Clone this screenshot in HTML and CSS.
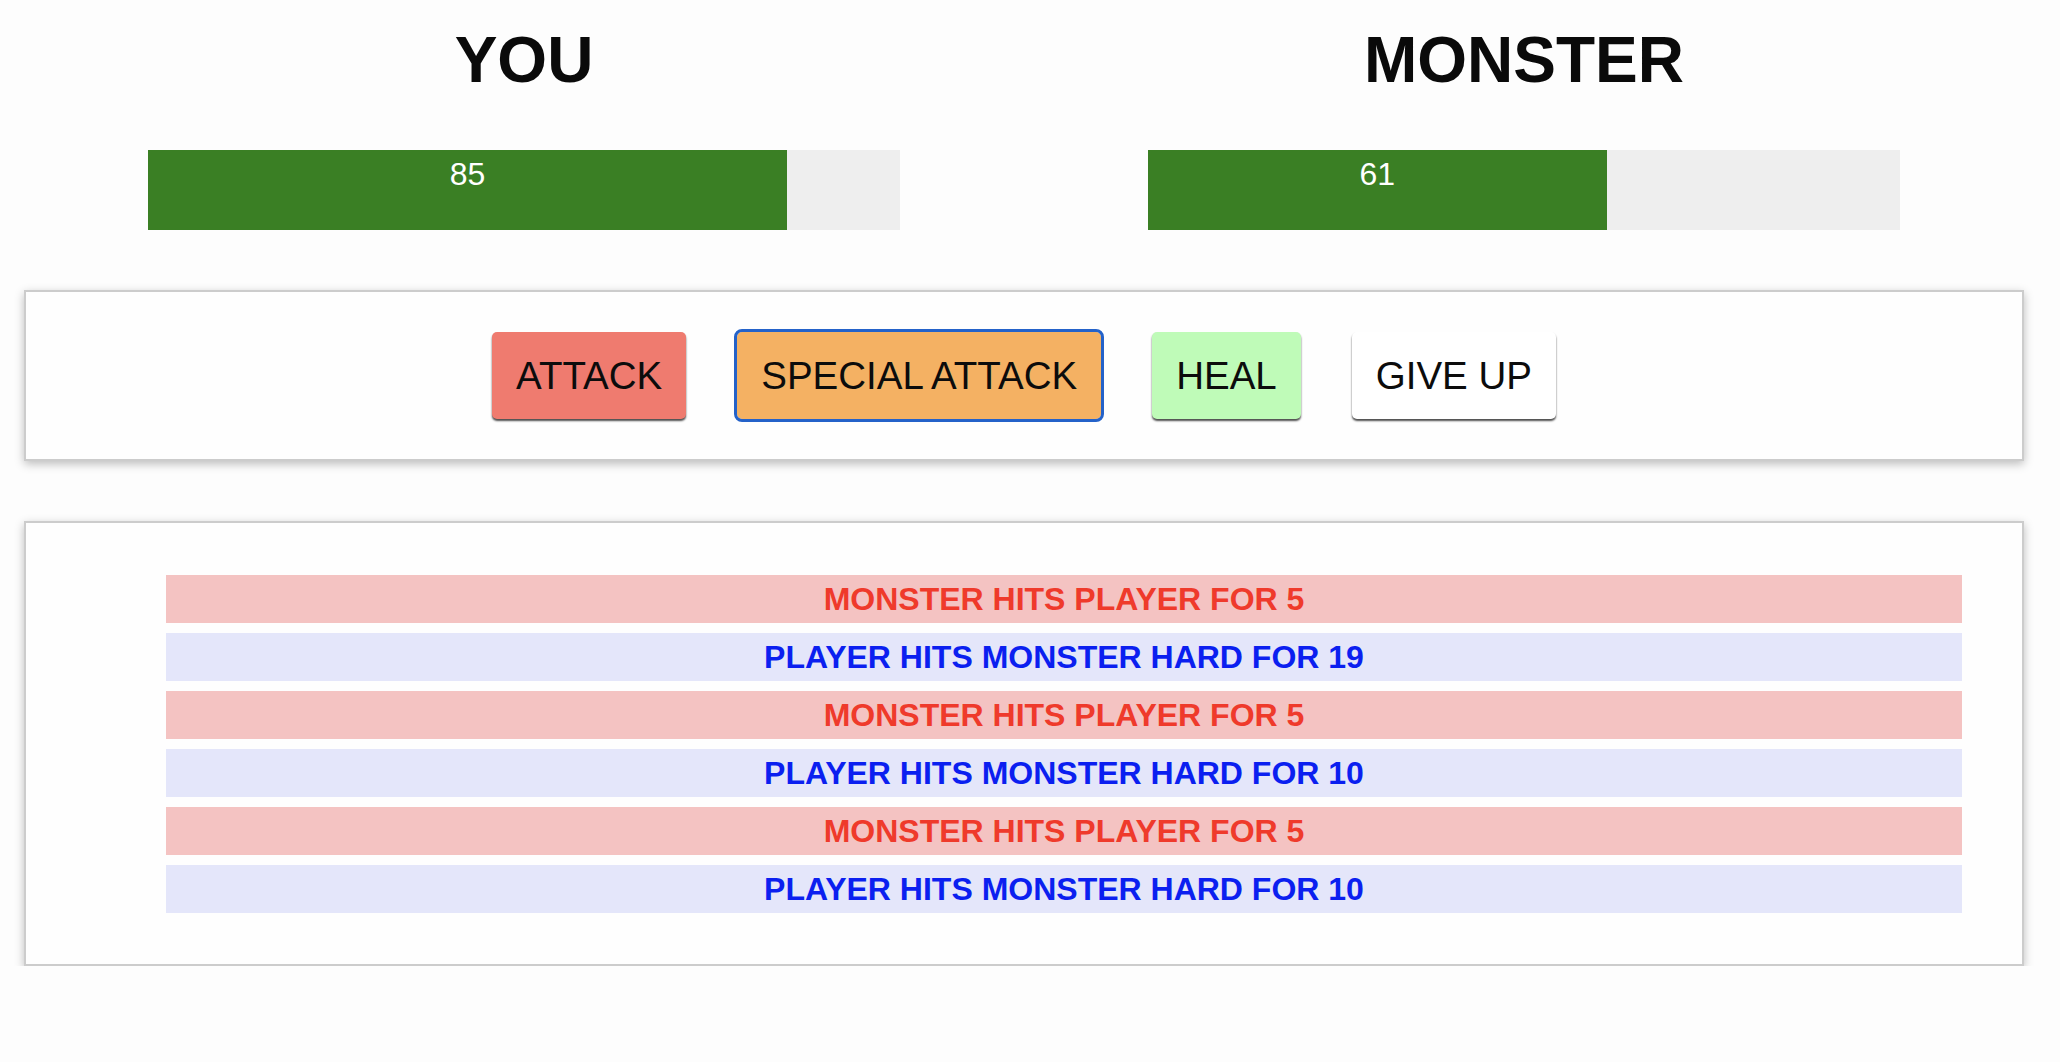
FILE: index.html
```html
<!DOCTYPE html>
<html lang="en">
<head>
<meta charset="utf-8">
<title>Monster Slayer</title>
<link rel="stylesheet" href="styles.css">
</head>
<body>
<div class="app">
  <header class="status">
    <section class="fighter">
      <h1 class="fighter-name">YOU</h1>
      <div class="healthbar">
        <div class="healthbar-fill" style="width: 85%;">85</div>
      </div>
    </section>
    <section class="fighter">
      <h1 class="fighter-name">MONSTER</h1>
      <div class="healthbar">
        <div class="healthbar-fill" style="width: 61%;">61</div>
      </div>
    </section>
  </header>

  <section class="panel controls">
    <button class="btn btn-attack">ATTACK</button>
    <button class="btn btn-special is-focused">SPECIAL ATTACK</button>
    <button class="btn btn-heal">HEAL</button>
    <button class="btn btn-giveup">GIVE UP</button>
  </section>

  <section class="panel log">
    <ul class="log-list">
      <li class="log-entry monster-turn">MONSTER HITS PLAYER FOR 5</li>
      <li class="log-entry player-turn">PLAYER HITS MONSTER HARD FOR 19</li>
      <li class="log-entry monster-turn">MONSTER HITS PLAYER FOR 5</li>
      <li class="log-entry player-turn">PLAYER HITS MONSTER HARD FOR 10</li>
      <li class="log-entry monster-turn">MONSTER HITS PLAYER FOR 5</li>
      <li class="log-entry player-turn">PLAYER HITS MONSTER HARD FOR 10</li>
    </ul>
  </section>
</div>
</body>
</html>
```

FILE: styles.css
```css
* {
  box-sizing: border-box;
}

html, body {
  margin: 0;
  padding: 0;
  background: #fdfdfd;
}

body {
  font-family: "Liberation Sans", Arial, Helvetica, sans-serif;
  color: #0c0c0c;
}

.app {
  width: 2000px;
  margin-left: 24px;
  padding-top: 23px;
}

.status {
  display: flex;
}

.fighter {
  flex: 1 1 0;
  display: flex;
  flex-direction: column;
  align-items: center;
}

.fighter-name {
  margin: 0;
  font-size: 64px;
  line-height: 74px;
  font-weight: bold;
  color: #0a0a0a;
}

.healthbar {
  width: 752px;
  height: 80px;
  margin-top: 53px;
  background: #eeeeee;
  display: flex;
}

.healthbar-fill {
  height: 100%;
  background: #3a7f24;
  color: #fff;
  font-size: 32px;
  line-height: 37px;
  padding-top: 6px;
  text-align: center;
}

.panel {
  background: #fefefe;
  border: 2px solid #cccccc;
  box-shadow: 0 3px 9px rgba(0, 0, 0, 0.26);
}

.controls {
  margin-top: 60px;
  padding: 40px 0;
  display: flex;
  justify-content: center;
  gap: 51px;
}

.btn {
  font-family: "Liberation Sans", Arial, Helvetica, sans-serif;
  font-size: 38.5px;
  line-height: 43px;
  padding: 22px 24px;
  border: none;
  border-radius: 5px;
  color: #0c0c0c;
  box-shadow: 0 2px 2px rgba(0, 0, 0, 0.7);
  cursor: pointer;
}

.btn-attack {
  background: #ef7b6f;
}

.btn-special {
  background: #f4b163;
}

.btn-heal {
  background: #bffbb8;
}

.btn-giveup {
  background: #ffffff;
}

.is-focused {
  box-shadow: none;
  outline: 3px solid #2462c9;
  outline-offset: 0;
}

.log {
  margin-top: 60px;
  padding: 52px 60px 51px 140px;
}

.log-list {
  list-style: none;
  margin: 0;
  padding: 0;
  display: flex;
  flex-direction: column;
  gap: 10px;
}

.log-entry {
  height: 48px;
  line-height: 49px;
  font-size: 32px;
  font-weight: bold;
  text-align: center;
}

.monster-turn {
  background: #f4c3c2;
  color: #ef3a2b;
}

.player-turn {
  background: #e4e6fa;
  color: #0b1ff0;
}
```
